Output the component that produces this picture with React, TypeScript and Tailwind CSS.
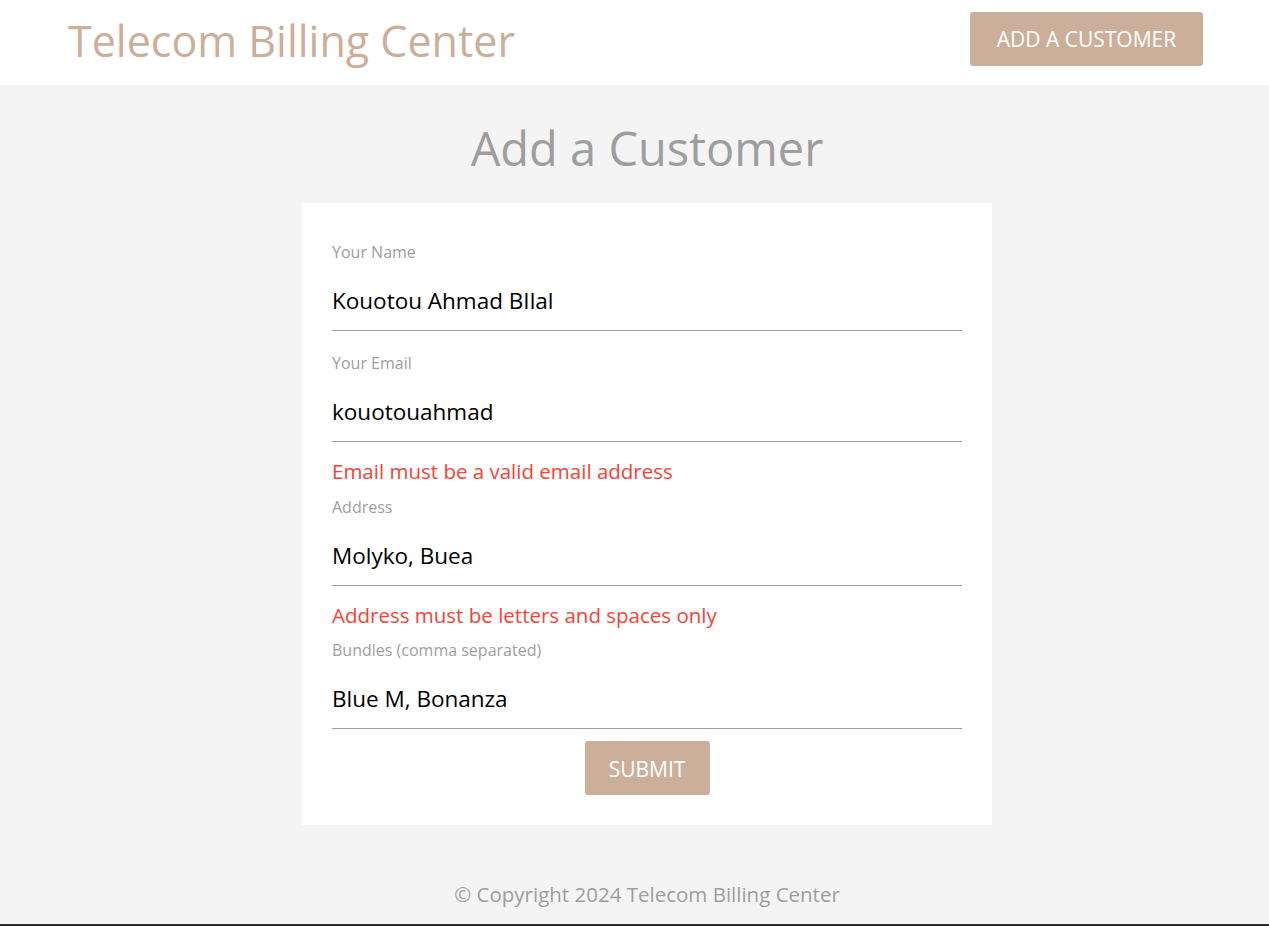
import React from 'react'

const font = { fontFamily: '"Open Sans", "Noto Sans", sans-serif' }

type FieldProps = {
  label: string
  value: string
  error?: string
  className?: string
}

function Field({ label, value, error, className }: FieldProps) {
  return (
    <div className={className}>
      <label className="block text-[16px] leading-[24px] text-[#9e9e9e]">{label}</label>
      <input
        readOnly
        value={value}
        className="block w-full h-[67px] pt-[6px] border-b border-[#9e9e9e] text-[22.5px] text-black outline-none bg-transparent"
      />
      {error && <p className="mt-[15px] text-[20.5px] leading-[28px] text-[#f44336]">{error}</p>}
    </div>
  )
}

export default function App() {
  return (
    <div className="h-[926px] flex flex-col bg-[#f4f4f4]" style={font}>
      <header className="h-[85px] bg-white flex items-center justify-between pl-[68px] pr-[66px]">
        <h1 className="text-[43px] text-[#cbaf9b] leading-none -mt-[5px]">Telecom Billing Center</h1>
        <button className="w-[233px] h-[54px] pt-[3px] bg-[#cbaf9b] text-white text-[21px] rounded-[3px] -mt-[8px]">
          ADD A CUSTOMER
        </button>
      </header>

      <main className="flex flex-col items-center pl-[25px]">
        <h2 className="mt-[34px] mb-[26px] text-[47px] leading-[58px] text-[#9e9e9e]">Add a Customer</h2>

        <form className="w-[690px] bg-white pt-[37px] px-[30px] pb-[30px]">
          <Field label="Your Name" value="Kouotou Ahmad BIlal" />
          <Field className="mt-[20px]" label="Your Email" value="kouotouahmad" error="Email must be a valid email address" />
          <Field className="mt-[10px]" label="Address" value="Molyko, Buea" error="Address must be letters and spaces only" />
          <Field className="mt-[9px]" label="Bundles (comma separated)" value="Blue M, Bonanza" />
          <div className="flex justify-center mt-[12px]">
            <button type="button" className="w-[125px] h-[54px] pt-[3px] bg-[#cbaf9b] text-white text-[21px] rounded-[3px]">
              SUBMIT
            </button>
          </div>
        </form>

        <footer className="mt-[55px] text-[20.5px] leading-[28px] text-[#9e9e9e]">© Copyright 2024 Telecom Billing Center</footer>
      </main>

      <div className="mt-auto h-[2px] bg-[#2b2b2b]" />
    </div>
  )
}
